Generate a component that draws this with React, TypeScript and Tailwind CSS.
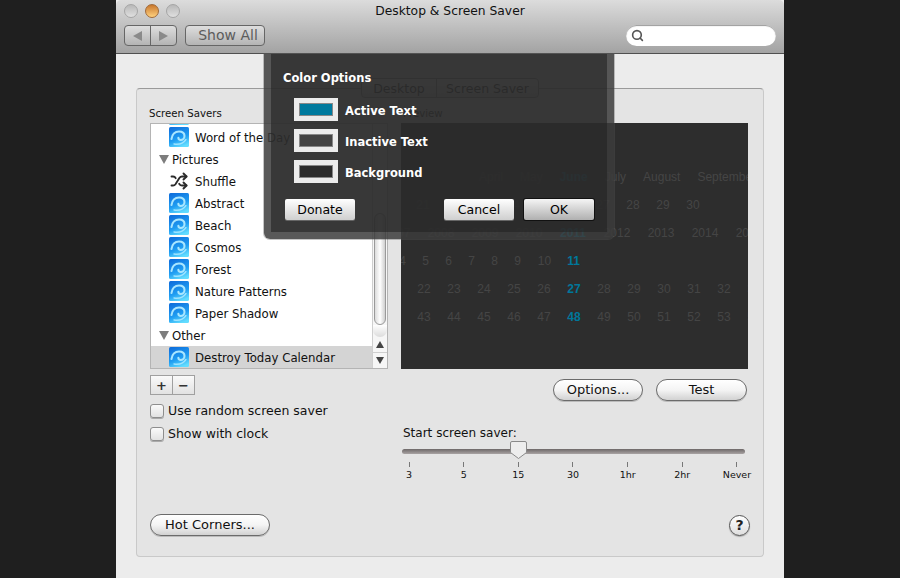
import { Shuffle, Search } from "lucide-react";

const FONT = "font-['DejaVu_Sans',sans-serif]";

function SaverIcon() {
  return (
    <svg width="20" height="20" viewBox="0 0 20 20" className="shrink-0">
      <defs>
        <linearGradient id="saver" x1="0.2" y1="0" x2="0.6" y2="1">
          <stop offset="0" stopColor="#0f6fdc" />
          <stop offset="0.6" stopColor="#1f9df2" />
          <stop offset="1" stopColor="#62dcff" />
        </linearGradient>
      </defs>
      <rect width="20" height="20" rx="1.5" fill="url(#saver)" />
      <path
        d="M2.500 12C3 7.500 6 4.500 10 4.500c3.500 0 5.500 2 5.500 4.500 0 2.500-2 4-3.800 4-1.500 0-2.500-1-2.300-2.300"
        fill="none"
        stroke="#a9e6ff"
        strokeWidth="2.100"
        strokeLinecap="round"
      />
      <path d="M5 17c4 .8 9-.2 12-4.500" fill="none" stroke="#9fe4ff" strokeWidth="1.400" strokeLinecap="round" />
    </svg>
  );
}

function SaverRow({ label, shuffle, selected }: { label: string; shuffle?: boolean; selected?: boolean }) {
  return (
    <div className={`flex h-[22px] shrink-0 items-center gap-[6px] pl-[18px] ${selected ? "bg-[#d4d4d4]" : ""}`}>
      {shuffle ? (
        <span className="flex w-[20px] justify-center">
          <Shuffle size={18} strokeWidth={2.500} className="text-[#2b2b2b]" />
        </span>
      ) : (
        <SaverIcon />
      )}
      <span className="whitespace-nowrap pt-[4px]">{label}</span>
    </div>
  );
}

function GroupRow({ label }: { label: string }) {
  return (
    <div className="flex h-[22px] shrink-0 items-center gap-[3px] pl-[8px]">
      <svg width="10" height="9" viewBox="0 0 10 9">
        <polygon points="0,0 10,0 5,9" fill="#7d7d7d" />
      </svg>
      <span className="pt-[4px]">{label}</span>
    </div>
  );
}

function PillButton({ label, className }: { label: string; className: string }) {
  return (
    <button
      type="button"
      className={`h-[22px] rounded-full border border-[#6b6b6b] bg-gradient-to-b from-[#ffffff] via-[#f4f4f4] to-[#d2d2d2] text-center text-[13px] leading-[20px] text-[#111] shadow-[0_1px_0_#bbb] ${className}`}
    >
      {label}
    </button>
  );
}

function Checkbox({ label }: { label: string }) {
  return (
    <label className="flex h-[15px] items-center gap-[4px] text-[12.5px] text-[#111]">
      <span className="h-[14px] w-[14px] rounded-[3px] border border-[#8e8e8e] bg-gradient-to-b from-[#fafafa] to-[#e2e2e2] shadow-[0_1px_0_#aaa]" />
      <span className="pt-[2px]">{label}</span>
    </label>
  );
}

function Swatch({ color, label }: { color: string; label: string }) {
  return (
    <div className="flex h-[23px] items-center gap-[7px]">
      <div className="h-[23px] w-[44px] border-[5px] border-[#ececec] bg-[#888] p-px">
        <div className={`h-full w-full ${color}`} />
      </div>
      <span className="pt-[4px] text-[11.5px] font-bold text-white">{label}</span>
    </div>
  );
}

function SheetButton({ label, primary }: { label: string; primary?: boolean }) {
  return (
    <button
      type="button"
      className={`h-[21px] w-[70px] rounded-[2px] bg-gradient-to-b text-center text-[12.5px] leading-[21px] text-black ${
        primary
          ? "from-[#f5f5f5] to-[#b0b0b0] shadow-[0_0_0_1px_#111]"
          : "from-[#ffffff] to-[#cfcfcf] shadow-[0_1px_0_#666]"
      }`}
    >
      {label}
    </button>
  );
}

function CalendarRow({ items, cell, offset, active }: { items: string[]; cell: string; offset: string; active?: string }) {
  return (
    <div className={`flex h-[28px] items-center whitespace-nowrap ${offset}`}>
      {items.map((item) => (
        <span
          key={item}
          className={`shrink-0 text-center ${cell} ${item === active ? "font-bold text-[#00779b]" : ""}`}
        >
          {item}
        </span>
      ))}
    </div>
  );
}

const TICKS = ["3", "5", "15", "30", "1hr", "2hr", "Never"];

export default function App() {
  return (
    <div className={`flex h-[578px] w-[900px] justify-center overflow-hidden bg-[#1f1f1f] ${FONT}`}>
      <div className="relative flex h-[578px] w-[668px] flex-col bg-[#ececec]">
        {/* toolbar */}
        <div className="h-[54px] shrink-0 rounded-t-[5px] border-b border-[#505050] bg-gradient-to-b from-[#dcdcdc] to-[#a3a3a3]">
          <div className="grid h-[22px] grid-cols-[1fr_auto_1fr] items-center px-[8px]">
            <div className="flex gap-[7px]">
              <span className="h-[14px] w-[14px] rounded-full border border-[#a5a5a5] bg-gradient-to-b from-[#b8b8b8] to-[#e0e0e0]" />
              <span className="h-[14px] w-[14px] rounded-full border border-[#a06a3a] bg-gradient-to-b from-[#c8772c] to-[#ffd27e]" />
              <span className="h-[14px] w-[14px] rounded-full border border-[#a5a5a5] bg-gradient-to-b from-[#b8b8b8] to-[#e0e0e0]" />
            </div>
            <div className="text-[12.3px] text-[#111]">Desktop &amp; Screen Saver</div>
            <div />
          </div>
          <div className="mt-[3px] flex items-center pl-[8px] pr-[8px]">
            <div className="flex h-[21px] w-[53px] rounded-[4px] border border-[#666] bg-gradient-to-b from-[#dedede] to-[#b4b4b4]">
              <div className="flex flex-1 items-center justify-center border-r border-[#666]">
                <svg width="9" height="10" viewBox="0 0 9 10">
                  <polygon points="9,0 9,10 0,5" fill="#8a8a8a" />
                </svg>
              </div>
              <div className="flex flex-1 items-center justify-center">
                <svg width="9" height="10" viewBox="0 0 9 10">
                  <polygon points="0,0 0,10 9,5" fill="#8a8a8a" />
                </svg>
              </div>
            </div>
            <div className="ml-[8px] h-[21px] w-[80px] rounded-[4px] border border-[#666] bg-gradient-to-b from-[#dedede] to-[#b4b4b4] pl-[6px] text-center text-[14px] leading-[19px] text-[#5c5c5c]">
              Show All
            </div>
            <div className="ml-auto flex h-[21px] w-[150px] items-center rounded-full bg-white pl-[5px] shadow-[inset_0_1px_1px_#999]">
              <Search size={13} strokeWidth={3} className="text-[#555]" />
            </div>
          </div>
        </div>

        {/* pane */}
        <div className="flex flex-1 flex-col px-[20px] pb-[21px] pt-[24px] text-[11.75px] text-[#111]">
          <div className="relative z-10 -mb-[10px] flex h-[20px] w-[178px] self-center rounded-[4px] border border-[#8a8a8a] bg-gradient-to-b from-[#ffffff] to-[#d8d8d8] text-[12.5px] leading-[20px] text-[#111]">
            <div className="w-[75px] border-r border-[#8a8a8a] text-center">Desktop</div>
            <div className="flex-1 text-center">Screen Saver</div>
          </div>

          <div className="flex flex-1 flex-col rounded-[4px] border border-[#c9c9c9] border-t-[#9a9a9a] bg-[#e4e4e4] pb-[20px] pl-[13px] pr-[15px] pt-[16px]">
            <div className="flex gap-[13px]">
              {/* left column */}
              <div className="flex w-[238px] shrink-0 flex-col">
                <div className="-ml-px h-[18px] text-[10.2px] leading-[18px]">Screen Savers</div>
                <div className="flex h-[246px] border border-[#b4b4b4] bg-white">
                  <div className="flex min-w-0 flex-1 flex-col overflow-hidden text-[#111]">
                    <div className="-mt-[20px]">
                      <SaverRow label="Word of the Day" />
                    </div>
                    <SaverRow label="Word of the Day" />
                    <GroupRow label="Pictures" />
                    <SaverRow label="Shuffle" shuffle />
                    <SaverRow label="Abstract" />
                    <SaverRow label="Beach" />
                    <SaverRow label="Cosmos" />
                    <SaverRow label="Forest" />
                    <SaverRow label="Nature Patterns" />
                    <SaverRow label="Paper Shadow" />
                    <GroupRow label="Other" />
                    <SaverRow label="Destroy Today Calendar" selected />
                  </div>
                  <div className="flex w-[15px] shrink-0 flex-col border-l border-[#cfcfcf] bg-[#f6f6f6]">
                    <div className="mx-px mt-[89px] h-[112px] rounded-b-[7px] rounded-t-[7px] border border-[#9a9a9a] bg-gradient-to-r from-[#dcdcdc] via-[#ffffff] to-[#cfcfcf]" />
                    <div className="flex-1 rounded-b-[7px] bg-gradient-to-b from-[#ffffff] to-[#dcdcdc]" />
                    <div className="flex h-[16px] items-center justify-center border-b border-[#cfcfcf]">
                      <svg width="8" height="7" viewBox="0 0 8 7">
                        <polygon points="4,0 8,7 0,7" fill="#444" />
                      </svg>
                    </div>
                    <div className="flex h-[15px] items-center justify-center">
                      <svg width="8" height="7" viewBox="0 0 8 7">
                        <polygon points="0,0 8,0 4,7" fill="#444" />
                      </svg>
                    </div>
                  </div>
                </div>

                <div className="mt-[6px] flex h-[20px] w-[45px] border border-[#a0a0a0] bg-gradient-to-b from-[#fafafa] to-[#e2e2e2] text-[#333]">
                  <div className="flex flex-1 items-center justify-center border-r border-[#a0a0a0] text-[13px] font-bold leading-none">+</div>
                  <div className="flex flex-1 items-center justify-center text-[13px] font-bold leading-none">−</div>
                </div>

                <div className="mt-[8px] flex flex-col gap-[8px]">
                  <Checkbox label="Use random screen saver" />
                  <Checkbox label="Show with clock" />
                </div>
              </div>

              {/* right column */}
              <div className="flex w-[347px] shrink-0 flex-col">
                <div className="h-[18px] pl-[2px] text-[10.2px] leading-[18px]">Preview</div>
                <div className="h-[246px] overflow-hidden bg-[#2d2d2d] pt-[40px] font-['Liberation_Sans',sans-serif] text-[12px] text-[#454545]">
                  <CalendarRow
                    items={["April", "May", "June", "July", "August", "September"]}
                    cell="mr-[17px]"
                    offset="pl-[78px]"
                    active="June"
                  />
                  <CalendarRow
                    items={["17", "18", "19", "20", "21", "22", "23", "24", "25", "26", "27", "28", "29", "30"]}
                    cell="w-[30px]"
                    offset="-ml-[113px]"
                  />
                  <CalendarRow
                    items={["2007", "2008", "2009", "2010", "2011", "2012", "2013", "2014", "2015"]}
                    cell="w-[44px]"
                    offset="-ml-[26px]"
                    active="2011"
                  />
                  <div className="-ml-[10px] flex h-[28px] items-center">
                    {["4", "5", "6", "7", "8", "9"].map((n) => (
                      <span key={n} className="w-[23px] shrink-0 text-center">
                        {n}
                      </span>
                    ))}
                    <span className="ml-[4px] w-[23px] shrink-0 text-center">10</span>
                    <span className="ml-[6px] w-[23px] shrink-0 text-center font-bold text-[#00779b]">11</span>
                  </div>
                  <CalendarRow
                    items={["22", "23", "24", "25", "26", "27", "28", "29", "30", "31", "32", "33"]}
                    cell="w-[30px]"
                    offset="pl-[8px]"
                    active="27"
                  />
                  <CalendarRow
                    items={["43", "44", "45", "46", "47", "48", "49", "50", "51", "52", "53", "54"]}
                    cell="w-[30px]"
                    offset="pl-[8px]"
                    active="48"
                  />
                </div>

                <div className="mt-[10px] flex justify-end gap-[13px] pr-px">
                  <PillButton label="Options..." className="w-[90px]" />
                  <PillButton label="Test" className="w-[91px]" />
                </div>

                <div className="mt-[23px] h-[18px] pl-[2px] text-[12px] leading-[18px]">Start screen saver:</div>
                <div className="relative ml-px h-[20px] w-[343px]">
                  <div className="mt-[7px] h-[5px] rounded-full bg-gradient-to-b from-[#6e6868] to-[#a8a3a3]" />
                  <svg width="17" height="18" viewBox="0 0 17 18" className="absolute left-[108px] -top-[1px]">
                    <path d="M2 .5h13a1.500 1.500 0 0 1 1.500 1.500v9.500L8.500 17.500.5 11.500V2A1.500 1.500 0 0 1 2 .5z" fill="#ededed" stroke="#8a8a8a" />
                  </svg>
                </div>
                <div className="flex justify-between pl-[8px] pr-[11px] text-[9.5px] text-[#111]">
                  {TICKS.map((t) => (
                    <div key={t} className="flex w-0 flex-col items-center">
                      <div className="h-[5px] w-px shrink-0 bg-[#777]" />
                      <div className="mt-[1px] whitespace-nowrap leading-[14px]">{t}</div>
                    </div>
                  ))}
                </div>
              </div>
            </div>

            <div className="mt-auto flex items-center justify-between">
              <PillButton label="Hot Corners..." className="w-[120px]" />
              <div className="-mr-[2px] flex h-[21px] w-[21px] items-center justify-center rounded-full border border-[#555] bg-gradient-to-b from-[#ffffff] to-[#dedede] text-[14px] font-bold text-[#222] shadow-[0_1px_1px_#aaa]">
                ?
              </div>
            </div>
          </div>
        </div>

        {/* color options sheet */}
        <div className="absolute left-[148px] top-[54px] z-20 h-[185px] w-[350px] rounded-b-[6px] border-[7px] border-t-0 border-[rgba(60,60,60,0.85)] bg-[rgba(44,44,44,0.94)] bg-clip-padding pl-[12px] pr-[13px] shadow-[0_0_0_1px_rgba(90,90,90,0.35)]">
          <div className="pt-[15px] text-[11.5px] font-bold leading-[18px] text-white">Color Options</div>
          <div className="mt-[11px] flex flex-col gap-[8px] pl-[11px]">
            <Swatch color="bg-[#007a9e]" label="Active Text" />
            <Swatch color="bg-[#444444]" label="Inactive Text" />
            <Swatch color="bg-[#2c2c2c]" label="Background" />
          </div>
          <div className="mt-[16px] flex items-center pl-[2px]">
            <SheetButton label="Donate" />
            <div className="ml-auto flex gap-[10px]">
              <SheetButton label="Cancel" />
              <SheetButton label="OK" primary />
            </div>
          </div>
        </div>
      </div>
    </div>
  );
}
